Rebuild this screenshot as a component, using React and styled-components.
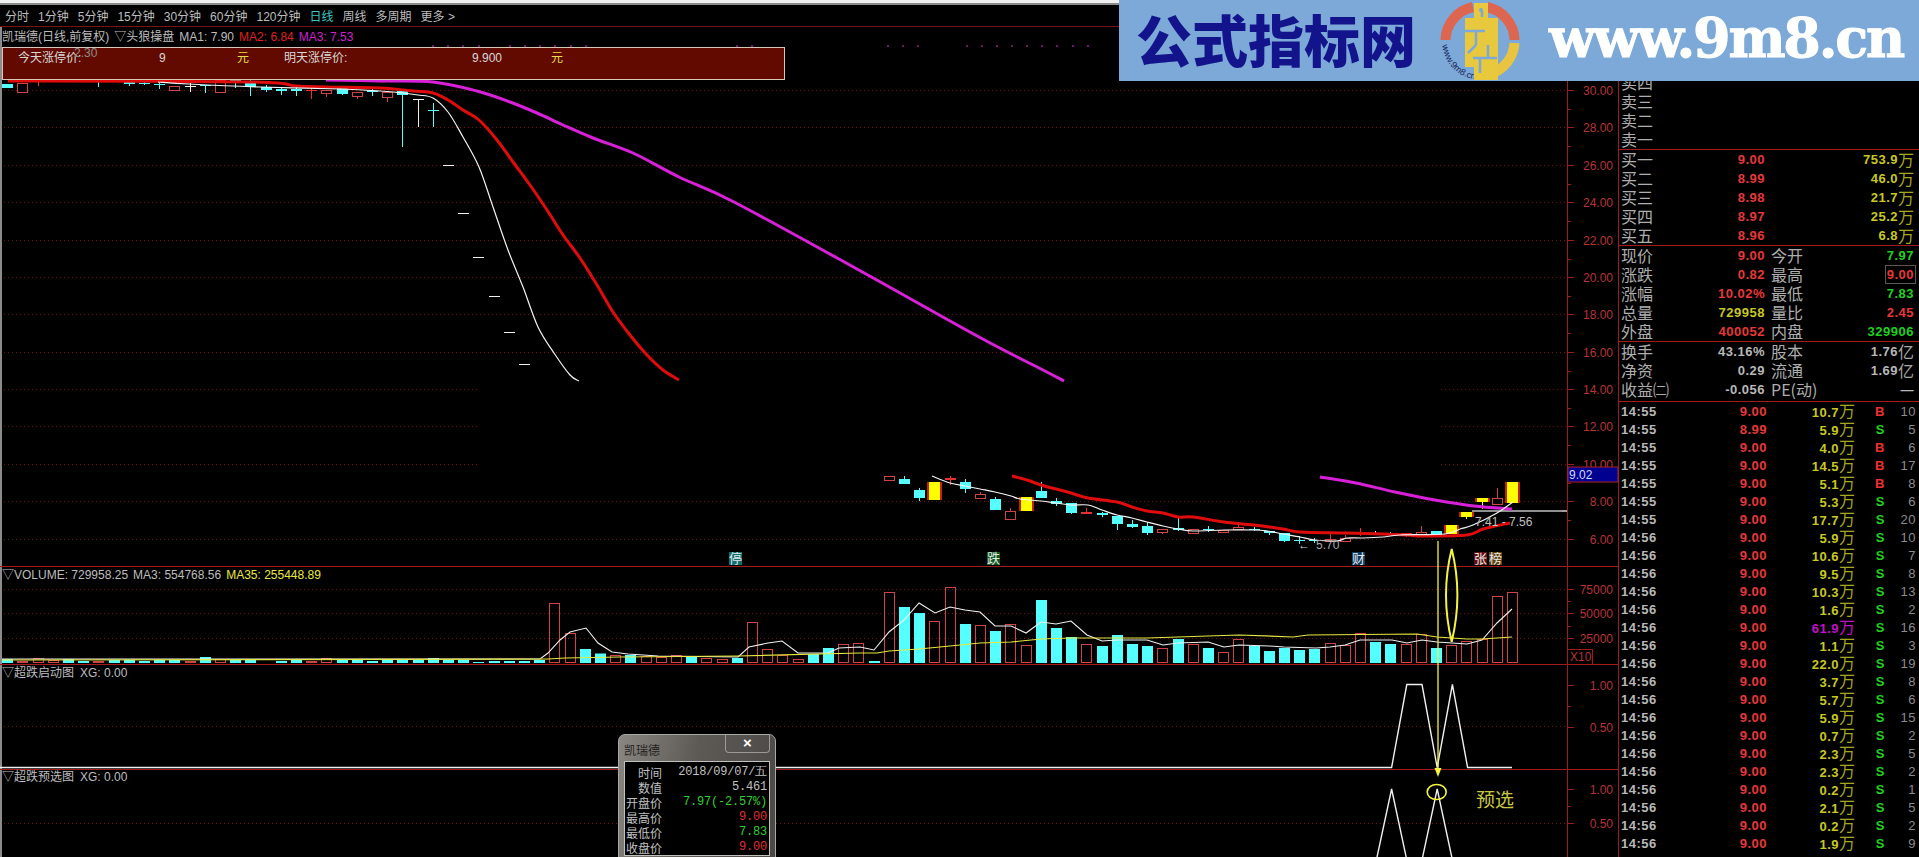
import styled, { createGlobalStyle } from 'styled-components'

const GlobalStyle = createGlobalStyle`
  html, body {
    margin: 0;
    padding: 0;
    background: #000;
    overflow: hidden;
  }
`

const SANS = `"Liberation Sans", "Noto Sans CJK SC", sans-serif`
const CJK = `"Noto Sans CJK SC", "Liberation Sans", sans-serif`
const RED = '#e83838'
const YELLOW = '#c8c820'
const GREEN = '#20d020'
const GRAY = '#b8b8b8'

const Page = styled.div`
  position: relative;
  width: 1919px;
  height: 857px;
  overflow: hidden;
  background: #000;
  font-family: ${SANS};
`
const TopStrip = styled.div`
  height: 3px;
  background: #f0f0f0;
  border-bottom: 2px solid #8c8c8c;
`
const Toolbar = styled.div`
  display: flex;
  align-items: center;
  gap: 9px;
  height: 21px;
  padding-left: 5px;
  border-bottom: 1px solid #7a1414;
  font-size: 12px;
  color: #bdbdbd;
`
const ToolItem = styled.span`
  color: ${(p) => (p.$active ? '#3cc4c4' : '#bdbdbd')};
  white-space: nowrap;
`
const Workspace = styled.div`
  display: flex;
  height: 830px;
`
const ChartColumn = styled.div`
  display: flex;
  flex-direction: column;
  width: 1618px;
  flex: none;
`
const Pane = styled.div`
  position: relative;
  height: ${(p) => p.$h}px;
  box-sizing: border-box;
  border-bottom: ${(p) => (p.$last ? 'none' : '1px solid #a01c1c')};
`
const Legend = styled.div`
  position: absolute;
  left: ${(p) => p.$left || 2}px;
  top: ${(p) => p.$top}px;
  display: flex;
  gap: ${(p) => p.$gap || 6}px;
  font-size: 12px;
  line-height: 18px;
  white-space: nowrap;
  color: #bdbdbd;
`
const LegendItem = styled.span`
  color: ${(p) => p.$color || '#bdbdbd'};
`
const ChartSvg = styled.svg`
  display: block;
  position: absolute;
  left: 0;
  top: 0;
`
const AxisLabel = styled.text`
  fill: #b83434;
  font-size: 12px;
  text-anchor: end;
  font-family: ${SANS};
`
const Overlay = styled.svg`
  position: absolute;
  left: 0;
  top: 0;
  pointer-events: none;
`
const LimitBox = styled.div`
  position: absolute;
  left: 2px;
  top: 47px;
  width: 781px;
  height: 31px;
  background: #620a00;
  border: 1px solid #d8c8b8;
  font-size: 12px;
  color: #d8d8d8;
`
const LimitRow = styled.div`
  display: grid;
  grid-template-columns: 15px 141px 78px 47px 188px 79px auto;
  line-height: 18px;
  padding-top: 1px;
`
const Ghost = styled.span`
  position: absolute;
  left: 71px;
  top: -2px;
  color: #8e8e8e;
`
const Unit = styled.span`
  color: #e8e040;
`
const Banner = styled.div`
  position: absolute;
  left: 1119px;
  top: 0;
  width: 800px;
  height: 81px;
  background: #7ca9d8;
  display: flex;
  align-items: center;
  padding-left: 17px;
  box-sizing: border-box;
`
const BannerTitle = styled.div`
  font-family: ${CJK};
  font-size: 56px;
  font-weight: 900;
  line-height: 81px;
  color: #13138c;
  white-space: nowrap;
  width: 304px;
  flex: none;
  position: relative;
  top: -3px;
`
const BannerLogo = styled.svg`
  flex: none;
  width: 80px;
  height: 80px;
`
const BannerUrl = styled.div`
  font-family: "DejaVu Serif", serif;
  font-size: 54px;
  font-weight: 700;
  letter-spacing: -2.2px;
  color: #fff;
  -webkit-text-stroke: 1px #fff;
  margin-left: 29px;
  white-space: nowrap;
  position: relative;
  top: -3px;
`
const QuotePanel = styled.div`
  width: 301px;
  flex: none;
  box-sizing: border-box;
  border-left: 1px solid #a01c1c;
  padding-top: 27px;
`
const Section = styled.div`
  border-bottom: 1px solid #a01c1c;
  padding-bottom: ${(p) => p.$pad || 0}px;
`
const QuoteRow = styled.div`
  display: grid;
  grid-template-columns: 146px 145px;
  column-gap: 4px;
  height: 19px;
  padding-left: 2px;
`
const Cell = styled.div`
  display: flex;
  justify-content: space-between;
  align-items: center;
  height: 19px;
`
const Label = styled.span`
  font-family: ${CJK};
  font-size: 16px;
  line-height: 19px;
  color: #aeaeae;
  white-space: nowrap;
`
const Num = styled.span`
  font-size: 13px;
  font-weight: 700;
  letter-spacing: 0.5px;
  line-height: 17px;
  color: ${(p) => p.$color || GRAY};
  white-space: nowrap;
  padding: 0 1px;
  border: 1px solid ${(p) => (p.$boxed ? '#585858' : 'transparent')};
  display: inline-flex;
  align-items: center;
`
const Suffix = styled.span`
  font-family: ${CJK};
  font-size: 16px;
  font-weight: 400;
  letter-spacing: 0;
  color: ${(p) => p.$color || '#a8a81c'};
  line-height: 17px;
`
const TickRow = styled.div`
  display: grid;
  grid-template-columns: 36px 110px 88px 1fr 30px;
  height: 18px;
  margin-left: 2px;
  margin-right: 3px;
  align-items: center;
  text-align: right;
  font-size: 13px;
  font-weight: 700;
  letter-spacing: 0.5px;
  line-height: 18px;
`
const TickCell = styled.span`
  color: ${(p) => p.$color || GRAY};
  text-align: ${(p) => (p.$left ? 'left' : 'right')};
  padding-right: ${(p) => p.$pr || 0}px;
  white-space: nowrap;
`
const CountCell = styled.span`
  color: #8c8c8c;
  font-weight: 400;
`
const InfoWindow = styled.div`
  position: absolute;
  left: 618px;
  top: 734px;
  width: 158px;
  height: 140px;
  box-sizing: border-box;
  border: 1px solid #a8a8a4;
  border-radius: 7px 7px 0 0;
  background: linear-gradient(100deg, #8a8782 0%, #5d5a56 45%, #4a4845 100%);
  padding: 0 5px;
`
const InfoHeader = styled.div`
  display: flex;
  justify-content: space-between;
  height: 26px;
`
const InfoTitle = styled.span`
  font-family: ${CJK};
  font-size: 12px;
  line-height: 26px;
  color: #1e1e1e;
  margin-top: 2px;
`
const CloseButton = styled.div`
  width: 45px;
  height: 18px;
  box-sizing: border-box;
  border: 1px solid #9a9a96;
  border-top: none;
  border-radius: 0 0 4px 4px;
  color: #fff;
  font-size: 15px;
  font-weight: 700;
  text-align: center;
  line-height: 16px;
`
const InfoBody = styled.div`
  background: #000;
  border: 1px solid #c0c0bc;
  padding-top: 3px;
`
const InfoRow = styled.div`
  display: grid;
  grid-template-columns: 37px 1fr;
  height: 15px;
  padding-right: 2px;
  line-height: 15px;
  font-size: 12px;
`
const InfoLabel = styled.span`
  font-family: ${CJK};
  color: #c0c0c0;
  text-align: right;
`
const InfoValue = styled.span`
  font-family: "Liberation Mono", monospace;
  font-size: 12px;
  letter-spacing: -0.2px;
  color: ${(p) => p.$color || '#c0c0c0'};
  text-align: right;
  white-space: nowrap;
`

const barX = (i) => 7.2 + 15.2 * i

// turns "x,y x,y" into a smooth path, the moving averages are curves in the picture
const smooth = (points) => {
  const p = points.split(' ').map((s) => s.split(',').map(Number))
  let d = `M${p[0][0]} ${p[0][1]}`
  for (let i = 0; i < p.length - 1; i++) {
    const a = p[Math.max(i - 1, 0)]
    const b = p[i]
    const c = p[i + 1]
    const e = p[Math.min(i + 2, p.length - 1)]
    d += ` C${b[0] + (c[0] - a[0]) / 6} ${b[1] + (c[1] - a[1]) / 6} ${c[0] - (e[0] - b[0]) / 6} ${c[1] - (e[1] - b[1]) / 6} ${c[0]} ${c[1]}`
  }
  return d
}

// [index, type, top, bottom, wickTop, wickBottom]
const candles = [
  [0, 'c', 84, 88, 84, 88], [1, 'r', 83, 92, 83, 92], [2, 'r', 80, 80, 80, 86], [6, 'c', 80, 80, 80, 87],
  [8, 'c', 80, 84, 80, 86], [9, 'c', 83, 84, 80, 85], [10, 'c', 84, 85, 80, 89], [11, 'r', 86, 90, 86, 90],
  [12, 'w', 86, 87, 80, 92], [13, 'c', 85, 86, 85, 93], [14, 'r', 80, 92, 80, 92], [15, 'c', 80, 83, 80, 88],
  [16, 'c', 83, 87, 80, 96], [17, 'c', 87, 90, 85, 92], [18, 'c', 89, 91, 87, 95], [19, 'c', 89, 91, 87, 96],
  [20, 'f', 90, 91, 88, 99], [21, 'r', 90, 93, 90, 97], [22, 'c', 88, 94, 87, 95], [23, 'r', 92, 96, 92, 99],
  [24, 'c', 91, 92, 89, 96], [25, 'r', 92, 97, 92, 102], [26, 'c', 91, 95, 91, 147], [27, 'w', 99, 100, 99, 127],
  [28, 'c', 110, 111, 103, 127], [29, 'w', 165, 166, 165, 166], [30, 'w', 213, 214, 213, 214],
  [31, 'w', 257, 258, 257, 258], [32, 'w', 296, 297, 296, 297], [33, 'w', 332, 333, 332, 333], [34, 'w', 364, 365, 364, 365],
  [58, 'r', 476, 480, 476, 480], [59, 'c', 479, 484, 476, 484], [60, 'c', 490, 498, 488, 501], [61, 'y', 482, 500, 482, 500],
  [62, 'f', 478, 480, 476, 485], [63, 'c', 482, 489, 479, 493], [64, 'r', 494, 498, 492, 499], [65, 'c', 499, 510, 497, 510],
  [66, 'r', 511, 519, 508, 519], [67, 'y', 497, 511, 497, 511], [68, 'c', 491, 498, 482, 498], [69, 'c', 501, 504, 498, 506],
  [70, 'c', 503, 513, 503, 514], [71, 'f', 512, 514, 508, 514], [72, 'c', 513, 515, 512, 517], [73, 'c', 516, 524, 516, 530],
  [74, 'c', 524, 527, 520, 528], [75, 'c', 526, 533, 522, 535], [76, 'r', 529, 532, 529, 534], [77, 'c', 528, 530, 518, 531],
  [78, 'r', 529, 533, 529, 533], [79, 'c', 529, 530, 526, 532], [80, 'r', 530, 532, 530, 533], [81, 'r', 527, 529, 525, 530],
  [82, 'c', 529, 530, 527, 531], [83, 'c', 531, 533, 531, 535], [84, 'c', 533, 541, 533, 542], [85, 'c', 540, 541, 536, 544],
  [86, 'c', 540, 541, 538, 543], [87, 'r', 539, 541, 533, 541], [88, 'r', 538, 541, 535, 541], [89, 'f', 533, 534, 528, 536],
  [90, 'w', 533, 534, 531, 535], [91, 'c', 533, 534, 532, 535], [92, 'f', 533, 536, 533, 537], [93, 'r', 532, 534, 526, 535],
  [94, 'c', 531, 535, 531, 536], [95, 'y', 525, 534, 525, 534], [96, 'y', 512, 517, 512, 519], [97, 'y', 498, 502, 498, 509],
  [98, 'r', 498, 504, 488, 504], [99, 'y', 482, 503, 482, 503],
]

const candleColor = { c: '#55ffff', r: '#d04444', f: '#e83030', w: '#f0f0f0' }

const Candle = ({ data }) => {
  const [i, type, top, bottom, wickTop, wickBottom] = data
  const x = barX(i)
  const wx = Math.round(x) + 0.5
  const left = Math.round(x) - 5
  if (type === 'y') {
    return (
      <g>
        <line x1={wx} x2={wx} y1={wickTop} y2={wickBottom} stroke="#ffff00" />
        <rect x={left - 2} y={top} width={15} height={bottom - top} fill="#c82010" />
        <rect x={left} y={top} width={11} height={bottom - top} fill="#ffff00" />
      </g>
    )
  }
  const color = candleColor[type]
  return (
    <g>
      <line x1={wx} x2={wx} y1={wickTop} y2={wickBottom} stroke={color} />
      {type === 'r' ? (
        <rect x={left + 0.5} y={top + 0.5} width={10} height={bottom - top} fill="#000" stroke={color} />
      ) : (
        <rect x={left} y={top} width={11} height={Math.max(bottom - top, 1)} fill={color} />
      )}
    </g>
  )
}

// bar heights from the baseline, negative is a red hollow bar
const volumes = [
  4, -2, -5, -3, 4, 2, -2, 3, 3, 2, 3, 3, -2, 6, -4, 3, 3, -1, 2, 3, -2, -5, 3, 3, 2, 3, 3, 3, 5, 3, 3, 1, 2, 2, 2, 3,
  -60, -30, 14, 9.5, -8, 8, -7, -6, -8, 6, -5, -4, 5, -41, -14, -8, -4, 9, 15, -19, -20, 2, -71, 56, 50, -42, -76, 39, -38, 32,
  -39, -18, 63, 35, 26, -19, 17, 28, 19, 17, -15, 24, -19, 15, -11, -24, 17, 12, 15, 13, 14, -20, -18, -30, 21, 19, -19, -29,
  15, -18, -22, -24, -67, -71,
]
const VOL_BASE = 663

const ma1a = '158,82 189,84 260,87 340,89 380,91 403,93 418,95 433,98 448,112 463,137 479,167 493,207 508,250 523,287 538,327 554,353 570,375 579,381'
const ma1b = '932,476 950,483 965,486 980,489 995,492 1011,496 1020,499 1041,501 1056,503 1071,505 1088,505 1102,510 1117,515 1132,518 1147,522 1163,526 1178,529 1193,531 1224,530 1254,530 1267,531 1283,534 1300,537 1315,540 1337,541 1347,538 1363,538 1383,537 1400,535 1445,534 1460,529 1473,525 1497,513 1513,502'
const ma2a = '8,81 46,81 255,82 296,86 326,87 380,88 413,91 433,93 448,100 463,110 479,120 497,140 513,162 530,185 547,210 563,235 580,258 597,285 613,312 630,335 647,355 663,370 679,380'
const ma2b = '1012,476 1027,480 1041,485 1056,489 1071,493 1088,498 1117,502 1132,507 1147,511 1163,513 1178,517 1193,517 1224,522 1254,525 1283,529 1300,532 1347,533 1383,534 1407,535 1423,536 1467,535 1483,529 1510,523'
const ma3a = '326,80 380,81 433,82 477,91 510,102 537,113 563,125 593,138 633,153 679,177 734,202 857,269 979,337 1043,370 1064,381'
const ma3b = '1320,477 1356,483 1395,492 1435,500 1474,506 1512,509'
const volMa3 = '2,659 540,659 548,653 560,640 570,632 586,628 598,643 612,652 628,654 658,656 738,657 749,647 768,643 782,641 798,653 828,653 839,648 860,647 874,650 889,632 904,620 919,603 935,613 950,607 965,610 980,612 995,626 1011,626 1026,633 1041,622 1056,624 1071,621 1087,635 1102,641 1117,640 1147,640 1163,645 1178,643 1208,642 1224,647 1239,645 1269,646 1284,647 1316,648 1330,647 1345,645 1360,640 1392,640 1407,643 1422,640 1437,642 1452,643 1467,644 1482,640 1497,623 1512,609'
const volMa35 = '2,660 548,659 565,658 620,657 738,656 860,653 877,653 889,651 919,649 950,646 980,643 1011,642 1041,639 1071,638 1117,638 1147,638 1178,637 1208,636 1239,635 1293,637 1308,635 1417,634 1437,637 1467,639 1482,639 1512,637'

const priceGrid = [
  [90, 0, 1567], [127, 0, 1567], [165, 0, 1567], [202, 0, 1567], [240, 0, 1567], [277, 0, 1567], [314, 0, 1567], [352, 0, 1567],
  [389, 0, 478], [389, 1441, 1567], [426, 0, 478], [426, 1441, 1567], [464, 0, 478], [464, 1441, 1567],
  [501, 0, 1567], [539, 0, 1567],
]
const priceLabels = [
  [90, '30.00'], [127, '28.00'], [165, '26.00'], [202, '24.00'], [240, '22.00'], [277, '20.00'], [314, '18.00'],
  [352, '16.00'], [389, '14.00'], [426, '12.00'], [464, '10.00'], [501, '8.00'], [539, '6.00'],
]
const highTicks = [433, 448, 463, 479, 510, 525, 540, 555, 571, 586, 737, 752, 888, 903, 918, 967, 982, 997, 1012, 1027, 1042, 1057, 1073, 1088]

const markers = [
  [729, '停', '#0c7070'], [987, '跌', '#0c5a20'], [1352, '财', '#0a3a60'], [1474, '张', '#601010'], [1489, '榜', '#604010'],
]

const Grid = ({ y, x1 = 0, x2 = 1567 }) => (
  <line x1={x1} x2={x2} y1={y + 0.5} y2={y + 0.5} stroke="#701212" strokeDasharray="1 3" />
)

const AxisTicks = ({ top, bottom, major }) => {
  const minor = major.slice(0, -1).map((y, i) => (y + major[i + 1]) / 2)
  return (
    <g stroke="#a01c1c">
      <line x1={1567.5} x2={1567.5} y1={top} y2={bottom} />
      {major.map((y) => (
        <line key={y} x1={1567} x2={1574} y1={y + 0.5} y2={y + 0.5} />
      ))}
      {minor.map((y) => (
        <line key={y} x1={1567} x2={1571} y1={Math.round(y) + 0.5} y2={Math.round(y) + 0.5} />
      ))}
    </g>
  )
}

const PriceChart = () => (
  <ChartSvg width="1618" height="539" viewBox="0 27 1618 539">
    {priceGrid.map(([y, x1, x2]) => (
      <Grid key={`${y}-${x1}`} y={y} x1={x1} x2={x2} />
    ))}
    <line x1="1" x2="1" y1="27" y2="566" stroke="#8c8c8c" strokeWidth="2" />
    <AxisTicks top={27} bottom={566} major={priceLabels.map((l) => l[0])} />
    {priceLabels.map(([y, text]) => (
      <AxisLabel key={text} x="1613" y={y + 5}>{text}</AxisLabel>
    ))}
    {highTicks.map((x) => (
      <line key={x} x1={x} x2={x} y1="45" y2="47" stroke="#e030e0" />
    ))}
    {candles.map((c) => (
      <Candle key={c[0]} data={c} />
    ))}
    <line x1="1472" x2="1566" y1="511" y2="511" stroke="#909090" strokeWidth="2" />
    <line x1="1562" x2="1567" y1="511" y2="511" stroke="#a0a0a0" strokeWidth="2" />
    <path d={smooth(ma3a)} fill="none" stroke="#d820d8" strokeWidth="3" />
    <path d={smooth(ma3b)} fill="none" stroke="#d820d8" strokeWidth="3" />
    <path d={smooth(ma2a)} fill="none" stroke="#e00c0c" strokeWidth="3" />
    <path d={smooth(ma2b)} fill="none" stroke="#e00c0c" strokeWidth="3" />
    <path d={smooth(ma1a)} fill="none" stroke="#f4f4f4" strokeWidth="1.2" />
    <path d={smooth(ma1b)} fill="none" stroke="#f4f4f4" strokeWidth="1.2" />
    <text x="1475" y="526" fill="#c0c0c0" fontSize="12" fontFamily={SANS}>7.41 - 7.56</text>
    <text x="1298" y="549" fill="#c8c8c8" fontSize="12" fontFamily={SANS}>←</text>
    <text x="1316" y="549" fill="#a8a8a8" fontSize="12" fontFamily={SANS}>5.70</text>
    {markers.map(([x, ch, bg]) => (
      <g key={ch}>
        <rect x={x} y="552" width="13" height="13" fill={bg} />
        <text x={x} y="563" fill="#e8e8e8" fontSize="13" fontFamily={CJK}>{ch}</text>
      </g>
    ))}
  </ChartSvg>
)

const VolumeChart = () => (
  <ChartSvg width="1618" height="97" viewBox="0 567 1618 97">
    {[589, 613, 638].map((y) => (
      <Grid key={y} y={y} />
    ))}
    <line x1="1" x2="1" y1="567" y2="664" stroke="#8c8c8c" strokeWidth="2" />
    <AxisTicks top={567} bottom={664} major={[589, 613, 638]} />
    {[[589, '75000'], [613, '50000'], [638, '25000']].map(([y, t]) => (
      <AxisLabel key={t} x="1613" y={y + 5}>{t}</AxisLabel>
    ))}
    {volumes.map((v, i) => {
      const h = Math.abs(v)
      const left = Math.round(barX(i)) - 5
      return v < 0 ? (
        <rect key={i} x={left + 0.5} y={VOL_BASE - h + 0.5} width="10" height={h - 1} fill="none" stroke="#d04444" />
      ) : (
        <rect key={i} x={left} y={VOL_BASE - h} width="11" height={h} fill="#55ffff" />
      )
    })}
    <polyline points={volMa3} fill="none" stroke="#f0f0f0" strokeWidth="1.1" />
    <polyline points={volMa35} fill="none" stroke="#e8e840" strokeWidth="1.2" />
    <rect x="1567.5" y="649.5" width="25" height="15" fill="#000" stroke="#a01c1c" />
    <text x="1570" y="661" fill="#b83434" fontSize="12" fontFamily={SANS}>X10</text>
  </ChartSvg>
)

const StartChart = () => (
  <ChartSvg width="1618" height="104" viewBox="0 665 1618 104">
    <Grid y={726} />
    <line x1="1" x2="1" y1="665" y2="769" stroke="#8c8c8c" strokeWidth="2" />
    <AxisTicks top={665} bottom={769} major={[685, 727]} />
    <AxisLabel x="1613" y="690">1.00</AxisLabel>
    <AxisLabel x="1613" y="732">0.50</AxisLabel>
    <polyline points="0,767.5 1391.6,767.5 1406.8,684.5 1422,684.5 1437.2,767.5 1452.4,684.5 1467.6,767.5 1512,767.5" fill="none" stroke="#f0f0f0" strokeWidth="1.4" />
  </ChartSvg>
)

const PreselectChart = () => (
  <ChartSvg width="1618" height="87" viewBox="0 770 1618 87">
    <Grid y={823} />
    <line x1="1" x2="1" y1="770" y2="857" stroke="#8c8c8c" strokeWidth="2" />
    <AxisTicks top={770} bottom={857} major={[789, 823]} />
    <AxisLabel x="1613" y="794">1.00</AxisLabel>
    <AxisLabel x="1613" y="828">0.50</AxisLabel>
    <polyline points="1376.4,860 1391.6,789 1406.8,860" fill="none" stroke="#f0f0f0" strokeWidth="1.4" />
    <polyline points="1422,860 1437.2,789 1452.4,860" fill="none" stroke="#f0f0f0" strokeWidth="1.4" />
  </ChartSvg>
)

const buySell = [
  ['买一', '9.00', '753.9'], ['买二', '8.99', '46.0'], ['买三', '8.98', '21.7'], ['买四', '8.97', '25.2'], ['买五', '8.96', '6.8'],
]

const ticks = [
  ['14:55', '9.00', '10.7', 'B', 10], ['14:55', '8.99', '5.9', 'S', 5], ['14:55', '9.00', '4.0', 'B', 6], ['14:55', '9.00', '14.5', 'B', 17],
  ['14:55', '9.00', '5.1', 'B', 8], ['14:55', '9.00', '5.3', 'S', 6], ['14:55', '9.00', '17.7', 'S', 20], ['14:56', '9.00', '5.9', 'S', 10],
  ['14:56', '9.00', '10.6', 'S', 7], ['14:56', '9.00', '9.5', 'S', 8], ['14:56', '9.00', '10.3', 'S', 13], ['14:56', '9.00', '1.6', 'S', 2],
  ['14:56', '9.00', '61.9', 'S', 16], ['14:56', '9.00', '1.1', 'S', 3], ['14:56', '9.00', '22.0', 'S', 19], ['14:56', '9.00', '3.7', 'S', 8],
  ['14:56', '9.00', '5.7', 'S', 6], ['14:56', '9.00', '5.9', 'S', 15], ['14:56', '9.00', '0.7', 'S', 2], ['14:56', '9.00', '2.3', 'S', 5],
  ['14:56', '9.00', '2.3', 'S', 2], ['14:56', '9.00', '0.2', 'S', 1], ['14:56', '9.00', '2.1', 'S', 5], ['14:56', '9.00', '0.2', 'S', 2],
  ['14:56', '9.00', '1.9', 'S', 9],
]

const infoRows = [
  ['时间', '2018/09/07/五'], ['数值', '5.461'], ['开盘价', '7.97(-2.57%)', '#30d030'], ['最高价', '9.00', '#e03030'],
  ['最低价', '7.83', '#30d030'], ['收盘价', '9.00', '#e03030'],
]

const QuotePair = ({ label, value, color, label2, value2, color2, boxed, suffix }) => (
  <QuoteRow>
    <Cell>
      <Label>{label}</Label>
      <Num $color={color}>{value}</Num>
    </Cell>
    <Cell>
      <Label>{label2}</Label>
      <Num $color={color2} $boxed={boxed}>
        {value2}
        {suffix && <Suffix $color="#a8a8a8">{suffix}</Suffix>}
      </Num>
    </Cell>
  </QuoteRow>
)

const Logo = () => (
  <BannerLogo viewBox="0 0 80 80">
    <defs>
      <path id="logo-arc" d="M2.5 44 A37 37 0 0 0 34 78" />
    </defs>
    <path d="M5.5 39 A34.5 34.5 0 0 1 33 6" fill="none" stroke="#dc6650" strokeWidth="10" />
    <path d="M47 6 A34.5 34.5 0 0 1 74.5 39" fill="none" stroke="#dc6650" strokeWidth="10" />
    <path d="M74.5 42 A34.5 34.5 0 0 1 50 73" fill="none" stroke="#e8c440" strokeWidth="10" />
    <text fill="#14205a" fontSize="9" fontFamily={SANS}>
      <textPath href="#logo-arc">www.9m8.cn</textPath>
    </text>
    <path d="M34 2 H48 V17 H58 V66 H58 V79 H34 V66 H25 V17 H34 Z" fill="#e8c83c" />
    <path d="M25 30 H45 M36 30 V44 M36 44 L28 52 M48 44 V56 M33 57 H57 M40 57 V72 M42 10 V16" stroke="#7ca9d8" strokeWidth="2.5" fill="none" />
    <circle cx="41" cy="9" r="2" fill="#7ca9d8" />
  </BannerLogo>
)

const App = () => (
  <Page>
    <GlobalStyle />
    <TopStrip />
    <Toolbar>
      {['分时', '1分钟', '5分钟', '15分钟', '30分钟', '60分钟', '120分钟'].map((t) => (
        <ToolItem key={t}>{t}</ToolItem>
      ))}
      <ToolItem $active>日线</ToolItem>
      <ToolItem>周线</ToolItem>
      <ToolItem>多周期</ToolItem>
      <ToolItem>更多 &gt;</ToolItem>
    </Toolbar>
    <Workspace>
      <ChartColumn>
        <Pane $h={540}>
          <PriceChart />
          <Legend $top={1} $gap={5}>
            <LegendItem>凯瑞德(日线,前复权)</LegendItem>
            <LegendItem>▽头狼操盘</LegendItem>
            <LegendItem>MA1: 7.90</LegendItem>
            <LegendItem $color="#e02020">MA2: 6.84</LegendItem>
            <LegendItem $color="#d020d0">MA3: 7.53</LegendItem>
          </Legend>
        </Pane>
        <Pane $h={98}>
          <VolumeChart />
          <Legend $top={-1} $gap={5}>
            <LegendItem>▽VOLUME: 729958.25</LegendItem>
            <LegendItem>MA3: 554768.56</LegendItem>
            <LegendItem $color="#e8e840">MA35: 255448.89</LegendItem>
          </Legend>
        </Pane>
        <Pane $h={105}>
          <StartChart />
          <Legend $top={-1}>
            <LegendItem>▽超跌启动图</LegendItem>
            <LegendItem>XG: 0.00</LegendItem>
          </Legend>
        </Pane>
        <Pane $h={87} $last>
          <PreselectChart />
          <Legend $top={-2}>
            <LegendItem>▽超跌预选图</LegendItem>
            <LegendItem>XG: 0.00</LegendItem>
          </Legend>
        </Pane>
      </ChartColumn>
      <QuotePanel>
        <Section>
          {['卖五', '卖四', '卖三', '卖二', '卖一'].map((t) => (
            <QuoteRow key={t}>
              <Cell>
                <Label>{t}</Label>
              </Cell>
            </QuoteRow>
          ))}
        </Section>
        <Section>
          {buySell.map(([label, price, vol]) => (
            <QuoteRow key={label}>
              <Cell>
                <Label>{label}</Label>
                <Num $color={RED}>{price}</Num>
              </Cell>
              <Cell>
                <span />
                <Num $color={YELLOW}>
                  {vol}
                  <Suffix>万</Suffix>
                </Num>
              </Cell>
            </QuoteRow>
          ))}
        </Section>
        <Section>
          <QuotePair label="现价" value="9.00" color={RED} label2="今开" value2="7.97" color2={GREEN} />
          <QuotePair label="涨跌" value="0.82" color={RED} label2="最高" value2="9.00" color2={RED} boxed />
          <QuotePair label="涨幅" value="10.02%" color={RED} label2="最低" value2="7.83" color2={GREEN} />
          <QuotePair label="总量" value="729958" color={YELLOW} label2="量比" value2="2.45" color2={RED} />
          <QuotePair label="外盘" value="400052" color={RED} label2="内盘" value2="329906" color2={GREEN} />
        </Section>
        <Section $pad={2}>
          <QuotePair label="换手" value="43.16%" label2="股本" value2="1.76" suffix="亿" />
          <QuotePair label="净资" value="0.29" label2="流通" value2="1.69" suffix="亿" />
          <QuotePair label="收益㈡" value="-0.056" label2="PE(动)" value2="—" />
        </Section>
        {ticks.map(([time, price, vol, side, count], i) => (
          <TickRow key={i}>
            <TickCell $left>{time}</TickCell>
            <TickCell $color={RED}>{price}</TickCell>
            <TickCell $color={vol === '61.9' ? '#c010c8' : YELLOW}>
              {vol}
              <Suffix $color={vol === '61.9' ? '#c010c8' : '#a8a81c'}>万</Suffix>
            </TickCell>
            <TickCell $color={side === 'B' ? '#f03030' : GREEN} $pr={1}>{side}</TickCell>
            <CountCell>{count}</CountCell>
          </TickRow>
        ))}
      </QuotePanel>
    </Workspace>

    <Overlay width="1919" height="857" viewBox="0 0 1919 857">
      <rect x="1568" y="467" width="50" height="15" fill="#000090" stroke="#b02020" />
      <text x="1569" y="479" fill="#d0d8ff" fontSize="12" fontFamily={SANS}>9.02</text>
      <line x1="1438" x2="1438" y1="541" y2="772" stroke="#f4f440" strokeWidth="1.3" />
      <path d="M1434.5 768 H1441.5 L1438 777 Z" fill="#f4f440" />
      <path d="M1451.7 549 C1444 580 1444 610 1451.7 641.7 C1459.4 610 1459.4 580 1451.7 549 Z" fill="none" stroke="#f4f440" strokeWidth="2" />
      <ellipse cx="1436.7" cy="792" rx="9.5" ry="7.5" fill="none" stroke="#f4f440" strokeWidth="1.6" />
      <text x="1476" y="807" fill="#c8c840" fontSize="19" fontFamily={CJK}>预选</text>
    </Overlay>

    <LimitBox>
      <Ghost>2.30</Ghost>
      <LimitRow>
        <span />
        <span>今天涨停价:</span>
        <span>9</span>
        <Unit>元</Unit>
        <span>明天涨停价:</span>
        <span>9.900</span>
        <Unit>元</Unit>
      </LimitRow>
    </LimitBox>

    <Banner>
      <BannerTitle>公式指标网</BannerTitle>
      <Logo />
      <BannerUrl>www.9m8.cn</BannerUrl>
    </Banner>

    <InfoWindow>
      <InfoHeader>
        <InfoTitle>凯瑞德</InfoTitle>
        <CloseButton>×</CloseButton>
      </InfoHeader>
      <InfoBody>
        {infoRows.map(([label, value, color]) => (
          <InfoRow key={label}>
            <InfoLabel>{label}</InfoLabel>
            <InfoValue $color={color}>{value}</InfoValue>
          </InfoRow>
        ))}
      </InfoBody>
    </InfoWindow>
  </Page>
)

export default App
